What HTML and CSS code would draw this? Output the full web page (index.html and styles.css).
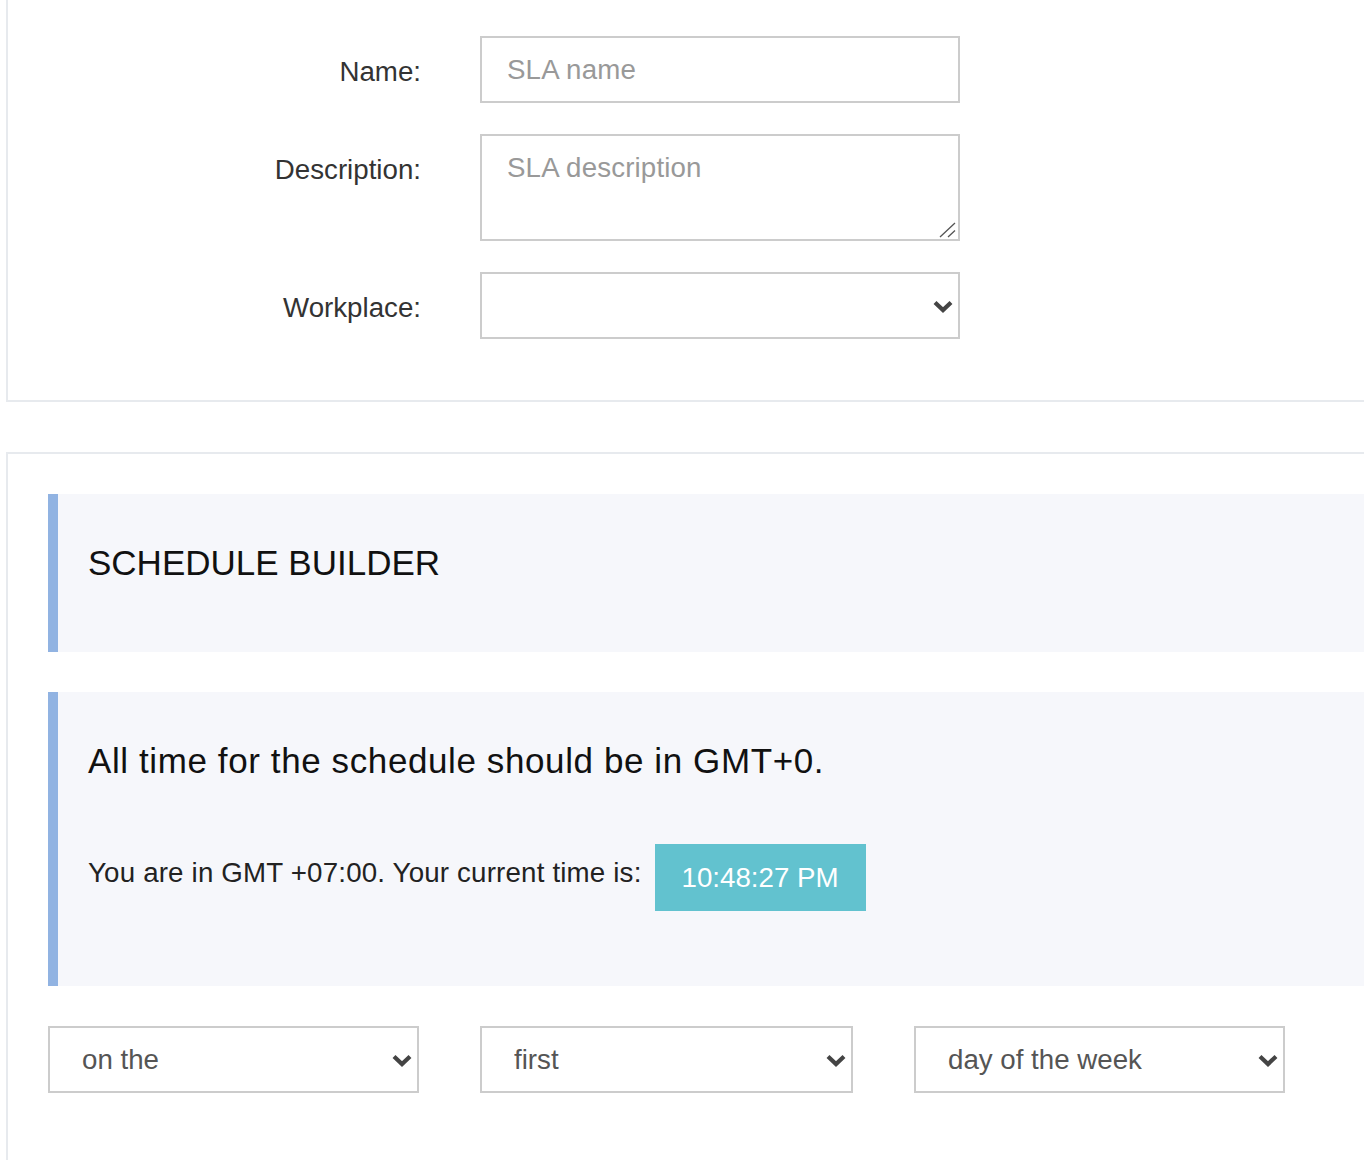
FILE: index.html
```html
<!DOCTYPE html>
<html lang="en">
<head>
<meta charset="utf-8">
<title>SLA</title>
<link rel="stylesheet" href="styles.css">
</head>
<body>
<div class="card card-form">
  <div class="form-grid">
    <label class="form-label" for="sla-name">Name:</label>
    <input class="form-control" id="sla-name" type="text" placeholder="SLA name">

    <label class="form-label" for="sla-desc">Description:</label>
    <div class="textarea-wrap">
      <textarea class="form-control form-textarea" id="sla-desc" placeholder="SLA description"></textarea>
      <svg class="grip" width="18" height="16" viewBox="0 0 18 16"><path d="M1 15 L16 1 M9 15 L16 8.5" fill="none" stroke="#555" stroke-width="1.3"/></svg>
    </div>

    <label class="form-label" for="sla-work">Workplace:</label>
    <div class="select-wrap">
      <select class="form-select" id="sla-work"><option value=""></option></select>
      <svg class="chevron" width="20" height="13" viewBox="0 0 20 13"><path d="M2 2.5 L10 10 L18 2.5" fill="none" stroke="#444" stroke-width="4.2"/></svg>
    </div>
  </div>
</div>

<div class="card card-schedule">
  <div class="callout callout-title">
    <h3 class="callout-heading">SCHEDULE BUILDER</h3>
  </div>
  <div class="callout callout-info">
    <p class="callout-heading callout-note">All time for the schedule should be in GMT+0.</p>
    <div class="time-row">
      <span class="time-text">You are in GMT +07:00. Your current time is:</span>
      <span class="time-badge">10:48:27 PM</span>
    </div>
  </div>
  <div class="select-row">
    <div class="select-wrap">
      <select class="form-select"><option>on the</option></select>
      <svg class="chevron" width="20" height="13" viewBox="0 0 20 13"><path d="M2 2.5 L10 10 L18 2.5" fill="none" stroke="#444" stroke-width="4.2"/></svg>
    </div>
    <div class="select-wrap">
      <select class="form-select"><option>first</option></select>
      <svg class="chevron" width="20" height="13" viewBox="0 0 20 13"><path d="M2 2.5 L10 10 L18 2.5" fill="none" stroke="#444" stroke-width="4.2"/></svg>
    </div>
    <div class="select-wrap">
      <select class="form-select"><option>day of the week</option></select>
      <svg class="chevron" width="20" height="13" viewBox="0 0 20 13"><path d="M2 2.5 L10 10 L18 2.5" fill="none" stroke="#444" stroke-width="4.2"/></svg>
    </div>
  </div>
</div>
</body>
</html>
```

FILE: styles.css
```css
html, body {
  margin: 0;
  padding: 0;
  overflow: hidden;
  background: #ffffff;
}

body {
  font-family: "Liberation Sans", Arial, Helvetica, sans-serif;
  font-size: 27.7px;
  color: #333;
}

.card {
  box-sizing: border-box;
  width: 1420px;
  margin-left: 6px;
  border: 2px solid #e7eaee;
  background: #fff;
}

.card-form {
  border-top: none;
  padding: 36px 0 61px 0;
}

.form-grid {
  display: grid;
  grid-template-columns: 413px 480px;
  column-gap: 59px;
  row-gap: 31px;
  align-items: start;
}

.form-label {
  text-align: right;
  padding-top: 16px;
  line-height: 40px;
  color: #333;
}

.form-control {
  box-sizing: border-box;
  width: 480px;
  height: 67px;
  margin: 0;
  padding: 0 25px;
  border: 2px solid #ccc;
  border-radius: 0;
  font-family: inherit;
  font-size: 27.7px;
  color: #555;
  background: #fff;
  outline: none;
}

.form-control::placeholder {
  color: #999;
  letter-spacing: 0.15px;
}

.textarea-wrap {
  position: relative;
  height: 107px;
}

.form-textarea {
  display: block;
  height: 107px;
  padding: 12px 25px;
  line-height: 40px;
  resize: none;
}

.grip {
  position: absolute;
  right: 3px;
  bottom: 3px;
  pointer-events: none;
}

.select-wrap {
  position: relative;
  height: 67px;
}

.form-select {
  -webkit-appearance: none;
  appearance: none;
  box-sizing: border-box;
  width: 100%;
  height: 67px;
  margin: 0;
  padding: 0 40px 0 32px;
  border: 2px solid #ccc;
  border-radius: 0;
  background: #fff;
  font-family: inherit;
  font-size: 27.7px;
  color: #555;
  outline: none;
}

.form-grid .form-select {
  width: 480px;
}

.chevron {
  position: absolute;
  right: 7px;
  top: 28px;
  pointer-events: none;
}

.card-schedule {
  margin-top: 50px;
  padding: 40px 40px 80px 40px;
  height: 800px;
}

.callout {
  background: #f6f7fb;
  border-left: 10px solid #91b3e2;
  padding: 49px 30px 70px 30px;
  margin-bottom: 40px;
}

.callout-info {
  padding-bottom: 75px;
}

.callout-heading {
  margin: 0;
  font-size: 35px;
  font-weight: normal;
  line-height: 39px;
  color: #111;
}

.callout-note {
  letter-spacing: 0.6px;
}

.time-row {
  display: flex;
  align-items: center;
  gap: 13px;
  margin-top: 64px;
}

.time-text {
  color: #222;
  line-height: 40px;
  margin-bottom: 10px;
  letter-spacing: 0.18px;
}

.time-badge {
  display: inline-flex;
  align-items: center;
  height: 67px;
  padding: 0 27px;
  background: #62c2cf;
  color: #fff;
}

.select-row {
  display: grid;
  grid-template-columns: 371px 373px 371px;
  column-gap: 61px;
}
```
